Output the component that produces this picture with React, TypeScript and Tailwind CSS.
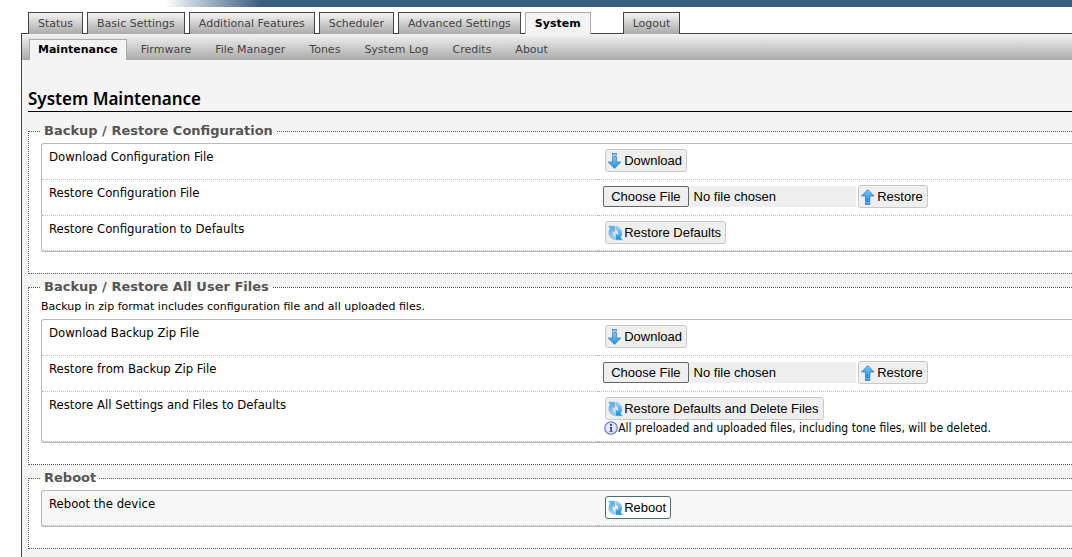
import React from "react";

function Defs() {
  return (
    <svg width="0" height="0" className="absolute" aria-hidden="true">
      <defs>
        <linearGradient id="arrowBlue" x1="0" y1="0" x2="0" y2="1">
          <stop offset="0" stopColor="#86c5f3" />
          <stop offset="1" stopColor="#1795ea" />
        </linearGradient>
        <linearGradient id="syncLight" x1="0" y1="0" x2="0" y2="1">
          <stop offset="0" stopColor="#4faae6" />
          <stop offset="1" stopColor="#a9d6f3" />
        </linearGradient>
        <linearGradient id="syncDark" x1="0" y1="0" x2="0" y2="1">
          <stop offset="0" stopColor="#b4daf3" />
          <stop offset="1" stopColor="#1488dc" />
        </linearGradient>
        <radialGradient id="infoFill">
          <stop offset="0" stopColor="#ffffff" />
          <stop offset="1" stopColor="#d3dcf4" />
        </radialGradient>
      </defs>
    </svg>
  );
}

function ArrowDown() {
  return (
    <svg viewBox="0 0 16 16" className="size-4 shrink-0" aria-hidden="true">
      <g fill="url(#arrowBlue)" stroke="#3a84c4" strokeWidth="0.8">
        <rect x="4.500" y="0.500" width="4" height="1.500" fill="#c3e2f8" />
        <path d="M4.500 3.500h4v5.500h4.300L6.500 15.400 0.300 9h4.200z" />
      </g>
    </svg>
  );
}

function ArrowUp() {
  return (
    <svg viewBox="0 0 16 16" className="size-4 shrink-0" aria-hidden="true">
      <g fill="url(#arrowBlue)" stroke="#2f7cbe" strokeWidth="0.8">
        <path d="M4.500 12.500V7H0.500L6.800 0.600 13 7H8.900v5.500z" />
        <rect x="4.500" y="13.800" width="4.400" height="1.500" />
      </g>
    </svg>
  );
}

function Sync() {
  return (
    <svg viewBox="0 0 16 16" className="size-4 shrink-0" aria-hidden="true">
      <path
        d="M0.600 1.200H6.800V7.400L5 5.700C4.200 7.800 4.700 10.300 6.600 11.800V14.400C1.400 13.800 -0.800 8.400 2.200 3.300z"
        fill="url(#syncLight)"
        stroke="#5fabdf"
        strokeWidth="0.5"
      />
      <path
        d="M8 1.600C13.200 2.200 15.600 7.800 12.600 12.600L14.400 14.800H7.800V8.200L9.800 10.200C10.700 8.200 10 5.600 8 4.400z"
        fill="url(#syncDark)"
        stroke="#5fabdf"
        strokeWidth="0.5"
      />
    </svg>
  );
}

function Info() {
  return (
    <svg viewBox="0 0 14 14" className="size-3.5 shrink-0" aria-hidden="true">
      <circle cx="7" cy="7" r="6.300" fill="url(#infoFill)" stroke="#5a74cf" strokeWidth="1.100" />
      <circle cx="7" cy="3.900" r="1.050" fill="#2334b4" />
      <path d="M5.600 5.900H7.900V10H8.800V10.800H5.400V10H6.300V6.700H5.600z" fill="#2334b4" />
    </svg>
  );
}

function IconButton({ icon, children, active }: { icon: React.ReactNode; children: React.ReactNode; active?: boolean }) {
  const look = active ? "border-[#4a6a84] bg-white" : "border-[#c8c8c8] bg-[#efefef]";
  return (
    <button
      type="button"
      className={`inline-flex h-[23px] items-center rounded-[3px] border pl-0.5 pr-1 font-['Liberation_Sans',Arial,sans-serif] text-[13px] text-black ${look}`}
    >
      {icon}
      {children}
    </button>
  );
}

function Section({ title, children }: { title: string; children: React.ReactNode }) {
  return (
    <fieldset className="mb-[5px] min-w-0 border border-r-0 border-dotted border-[#555] bg-white pb-[21px] pl-3 pt-1">
      <legend className="px-[3px] text-[13px] font-bold leading-4 text-[#555]">{title}</legend>
      {children}
    </fieldset>
  );
}

function Table({ children, shaded }: { children: React.ReactNode; shaded?: boolean }) {
  return (
    <table
      className={`w-full table-fixed border-separate border-spacing-0 rounded-l-[3px] border border-r-0 border-[#b8b8b8] ${shaded ? "bg-[#f7f7f7]" : "bg-white"}`}
    >
      <tbody>{children}</tbody>
    </table>
  );
}

function Row({ label, id, children }: { label: string; id?: string; children: React.ReactNode }) {
  return (
    <tr className="h-9 last:h-[35px]">
      <th
        scope="row"
        className="w-[54%] border-b border-dotted border-[#bbb] pl-[7px] pt-[5px] text-left align-top font-['DejaVu_Sans_Condensed','DejaVu_Sans',sans-serif] text-[13px] font-normal leading-4"
      >
        {id ? <label htmlFor={id}>{label}</label> : label}
      </th>
      <td className="border-b border-dotted border-[#bbb] pl-[5px] pt-[5px] align-top">{children}</td>
    </tr>
  );
}

function Upload({ id }: { id: string }) {
  return (
    <div className="flex items-center gap-0.5">
      <input
        id={id}
        type="file"
        className="h-[21px] w-[253px] bg-[#eee] font-['Liberation_Sans',Arial,sans-serif] text-[13px] leading-[21px] text-black file:mr-[5px] file:h-[21px] file:rounded-[2px] file:border file:border-solid file:border-[#666] file:bg-[#efefef] file:px-[7px] file:leading-[19px]"
      />
      <IconButton icon={<ArrowUp />}>Restore</IconButton>
    </div>
  );
}

const tabs = ["Status", "Basic Settings", "Additional Features", "Scheduler", "Advanced Settings", "System"];
const subTabs = ["Firmware", "File Manager", "Tones", "System Log", "Credits", "About"];
const tabShape = "flex h-[22px] items-center border border-b-0 px-[9px] pt-px";
const tabIdle = "border-[#444] bg-linear-to-b from-[#f4f4f4] to-[#aaa] text-[#444]";

export default function App() {
  return (
    <div className="min-h-screen overflow-hidden bg-white font-['DejaVu_Sans',Verdana,sans-serif] text-[11px] text-black">
      <Defs />
      <div className="h-[7px] bg-linear-to-r from-white from-[165px] to-[#3b5f82] to-[260px]" />
      <nav aria-label="Main" className="relative -mb-px mt-[5px] flex gap-1 pl-7">
        {tabs.map((t) => (
          <a
            key={t}
            href="#"
            className={`${tabShape} ${t === "System" ? "border-[#aaa] bg-[#f4f4f4] font-bold text-black" : tabIdle}`}
          >
            {t}
          </a>
        ))}
        <a href="#" className={`${tabShape} ml-7 ${tabIdle}`}>
          Logout
        </a>
      </nav>
      <div className="ml-[21px] min-h-[524px] border-l border-t border-[#444] bg-[#f4f4f4]">
        <nav
          aria-label="System"
          className="flex h-[26px] items-end bg-linear-to-b from-[#f4f4f4] to-[#aaa] pl-[7px] text-[#444]"
        >
          <a
            href="#"
            className="flex h-[21px] items-center border border-b-0 border-[#aaa] bg-[#f4f4f4] px-2 pt-px font-bold text-black"
          >
            Maintenance
          </a>
          <div className="flex gap-6 pl-3.5">
            {subTabs.map((t) => (
              <a key={t} href="#" className="flex h-[21px] items-center pt-0.5">
                {t}
              </a>
            ))}
          </div>
        </nav>
        <main className="pl-1.5">
          <h1 className="mb-[11px] mt-[27px] border-b border-black pb-px font-['Noto_Sans',sans-serif] text-[17px] font-semibold leading-[23px]">
            System Maintenance
          </h1>
          <Section title="Backup / Restore Configuration">
            <Table>
              <Row label="Download Configuration File">
                <div className="flex pl-0.5">
                  <IconButton icon={<ArrowDown />}>Download</IconButton>
                </div>
              </Row>
              <Row label="Restore Configuration File" id="config-file">
                <Upload id="config-file" />
              </Row>
              <Row label="Restore Configuration to Defaults">
                <div className="flex pl-0.5">
                  <IconButton icon={<Sync />}>Restore Defaults</IconButton>
                </div>
              </Row>
            </Table>
          </Section>
          <Section title="Backup / Restore All User Files">
            <p className="mb-1 leading-4">Backup in zip format includes configuration file and all uploaded files.</p>
            <Table>
              <Row label="Download Backup Zip File">
                <div className="flex pl-0.5">
                  <IconButton icon={<ArrowDown />}>Download</IconButton>
                </div>
              </Row>
              <Row label="Restore from Backup Zip File" id="backup-file">
                <Upload id="backup-file" />
              </Row>
              <Row label="Restore All Settings and Files to Defaults">
                <div className="flex pl-0.5">
                  <IconButton icon={<Sync />}>Restore Defaults and Delete Files</IconButton>
                </div>
                <p className="flex items-center pb-[5px] pl-px font-['DejaVu_Sans_Condensed','DejaVu_Sans',sans-serif] text-xs leading-4">
                  <Info />
                  All preloaded and uploaded files, including tone files, will be deleted.
                </p>
              </Row>
            </Table>
          </Section>
          <Section title="Reboot">
            <Table shaded>
              <Row label="Reboot the device">
                <div className="flex pl-0.5">
                  <IconButton icon={<Sync />} active>
                    Reboot
                  </IconButton>
                </div>
              </Row>
            </Table>
          </Section>
        </main>
      </div>
    </div>
  );
}
